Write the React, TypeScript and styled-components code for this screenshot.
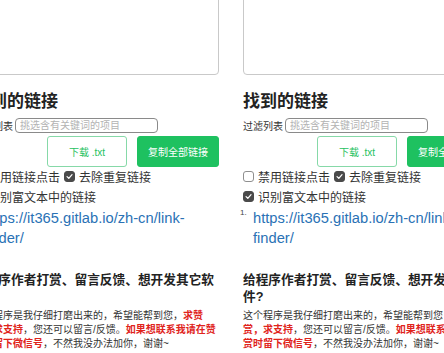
import React, { ReactElement } from 'react'
import styled, { createGlobalStyle } from 'styled-components'

const green = '#1ec160'

const GlobalStyle = createGlobalStyle`
  html, body {
    margin: 0;
    padding: 0;
    background: #fff;
    overflow: hidden;
  }
  body {
    font-family: "Liberation Sans", "Noto Sans CJK SC", sans-serif;
    color: #333;
  }
`

// two copies of the same page side by side, the left one scrolled off a bit
const Stage = styled.div`
  display: flex;
  gap: 24px;
  margin-left: -27px;
  margin-top: -10px;
  width: max-content;
`

const Panel = styled.div`
  width: 246px;
  flex-shrink: 0;
  display: flex;
  flex-direction: column;
`

const TextBox = styled.div`
  height: 85px;
  border: 1px solid #c9c9c9;
  border-radius: 4px;
  box-sizing: border-box;
  background: #fff;
`

const Title = styled.div`
  margin-top: 15px;
  font-size: 17px;
  line-height: 24px;
  font-weight: 700;
  color: #222;
`

const FilterRow = styled.div`
  margin-top: 4px;
  display: flex;
  align-items: center;
  gap: 2px;
  height: 15px;
  font-size: 10px;
  color: #333;
`

const FilterInput = styled.input`
  width: 143px;
  height: 15px;
  box-sizing: border-box;
  border: 1px solid #8a8a8a;
  border-radius: 4px;
  padding: 0 4px;
  margin: 0;
  font-family: inherit;
  font-size: 10px;
  line-height: 13px;
  outline: none;
  &::placeholder {
    color: #b3b3b3;
  }
`

const Buttons = styled.div`
  margin-top: 3px;
  display: flex;
  justify-content: flex-end;
  gap: 10px;
`

const Button = styled.div<{ $solid?: boolean; $w: number }>`
  width: ${p => p.$w}px;
  height: 31px;
  box-sizing: border-box;
  display: flex;
  align-items: center;
  justify-content: center;
  border-radius: 3px;
  font-size: 10px;
  border: 1px solid ${p => (p.$solid ? green : '#86d9a8')};
  background: ${p => (p.$solid ? green : '#fff')};
  color: ${p => (p.$solid ? '#fff' : green)};
`

const Checks = styled.div`
  margin-top: -1px;
`

const CheckRow = styled.div`
  display: flex;
  align-items: center;
  gap: 4px;
  height: 20px;
  font-size: 12px;
  color: #333;
  white-space: nowrap;
`

const Box = styled.span<{ $on?: boolean }>`
  width: 11px;
  height: 11px;
  box-sizing: border-box;
  border-radius: 3px;
  flex-shrink: 0;
  display: flex;
  align-items: center;
  justify-content: center;
  border: 1px solid ${p => (p.$on ? '#4a4a4a' : '#8f8f8f')};
  background: ${p => (p.$on ? '#4a4a4a' : '#fff')};
`

const LinkList = styled.ol`
  margin: 2px 0 0 -3px;
  padding: 0;
  list-style: none;
`

const LinkItem = styled.li`
  display: flex;
`

const Marker = styled.span`
  width: 13px;
  flex-shrink: 0;
  font-size: 8px;
  line-height: 10px;
  color: #444;
`

const Link = styled.a`
  font-size: 14.7px;
  line-height: 20px;
  color: #2a72b5;
  text-decoration: none;
`

const SubTitle = styled.div`
  margin-top: 24px;
  font-size: 12.7px;
  line-height: 17px;
  font-weight: 700;
  color: #222;
`

const Body = styled.div`
  margin-top: 3px;
  font-size: 10px;
  line-height: 14px;
  color: #333;
`

const Red = styled.span`
  color: #e0241c;
  font-weight: 700;
`

const Check = ({ on }: { on?: boolean }) => (
  <Box $on={on}>
    {on && (
      <svg width="7" height="7" viewBox="0 0 10 10">
        <path d="M1.5 5.2 L4 7.6 L8.6 2.4" fill="none" stroke="#fff" strokeWidth="1.8" strokeLinecap="round" strokeLinejoin="round" />
      </svg>
    )}
  </Box>
)

const Page = (): ReactElement => (
  <Panel>
    <TextBox />
    <Title>找到的链接</Title>
    <FilterRow>
      <span>过滤列表</span>
      <FilterInput placeholder="挑选含有关键词的项目" />
    </FilterRow>
    <Buttons>
      <Button $w={80}>下载 .txt</Button>
      <Button $w={82} $solid>复制全部链接</Button>
    </Buttons>
    <Checks>
      <CheckRow>
        <Check />
        <span>禁用链接点击</span>
        <Check on />
        <span>去除重复链接</span>
      </CheckRow>
      <CheckRow>
        <Check on />
        <span>识别富文本中的链接</span>
      </CheckRow>
    </Checks>
    <LinkList>
      <LinkItem>
        <Marker>1.</Marker>
        <Link href="#">https://it365.gitlab.io/zh-cn/link-finder/</Link>
      </LinkItem>
    </LinkList>
    <SubTitle>给程序作者打赏、留言反馈、想开发其它软件?</SubTitle>
    <Body>
      这个程序是我仔细打磨出来的，希望能帮到您，<Red>求赞赏，求支持</Red>，您还可以留言/反馈。
      <Red>如果想联系我请在赞赏时留下微信号</Red>，不然我没办法加你，谢谢~
    </Body>
  </Panel>
)

const App = (): ReactElement => (
  <>
    <GlobalStyle />
    <Stage>
      <Page />
      <Page />
    </Stage>
  </>
)

export default App
